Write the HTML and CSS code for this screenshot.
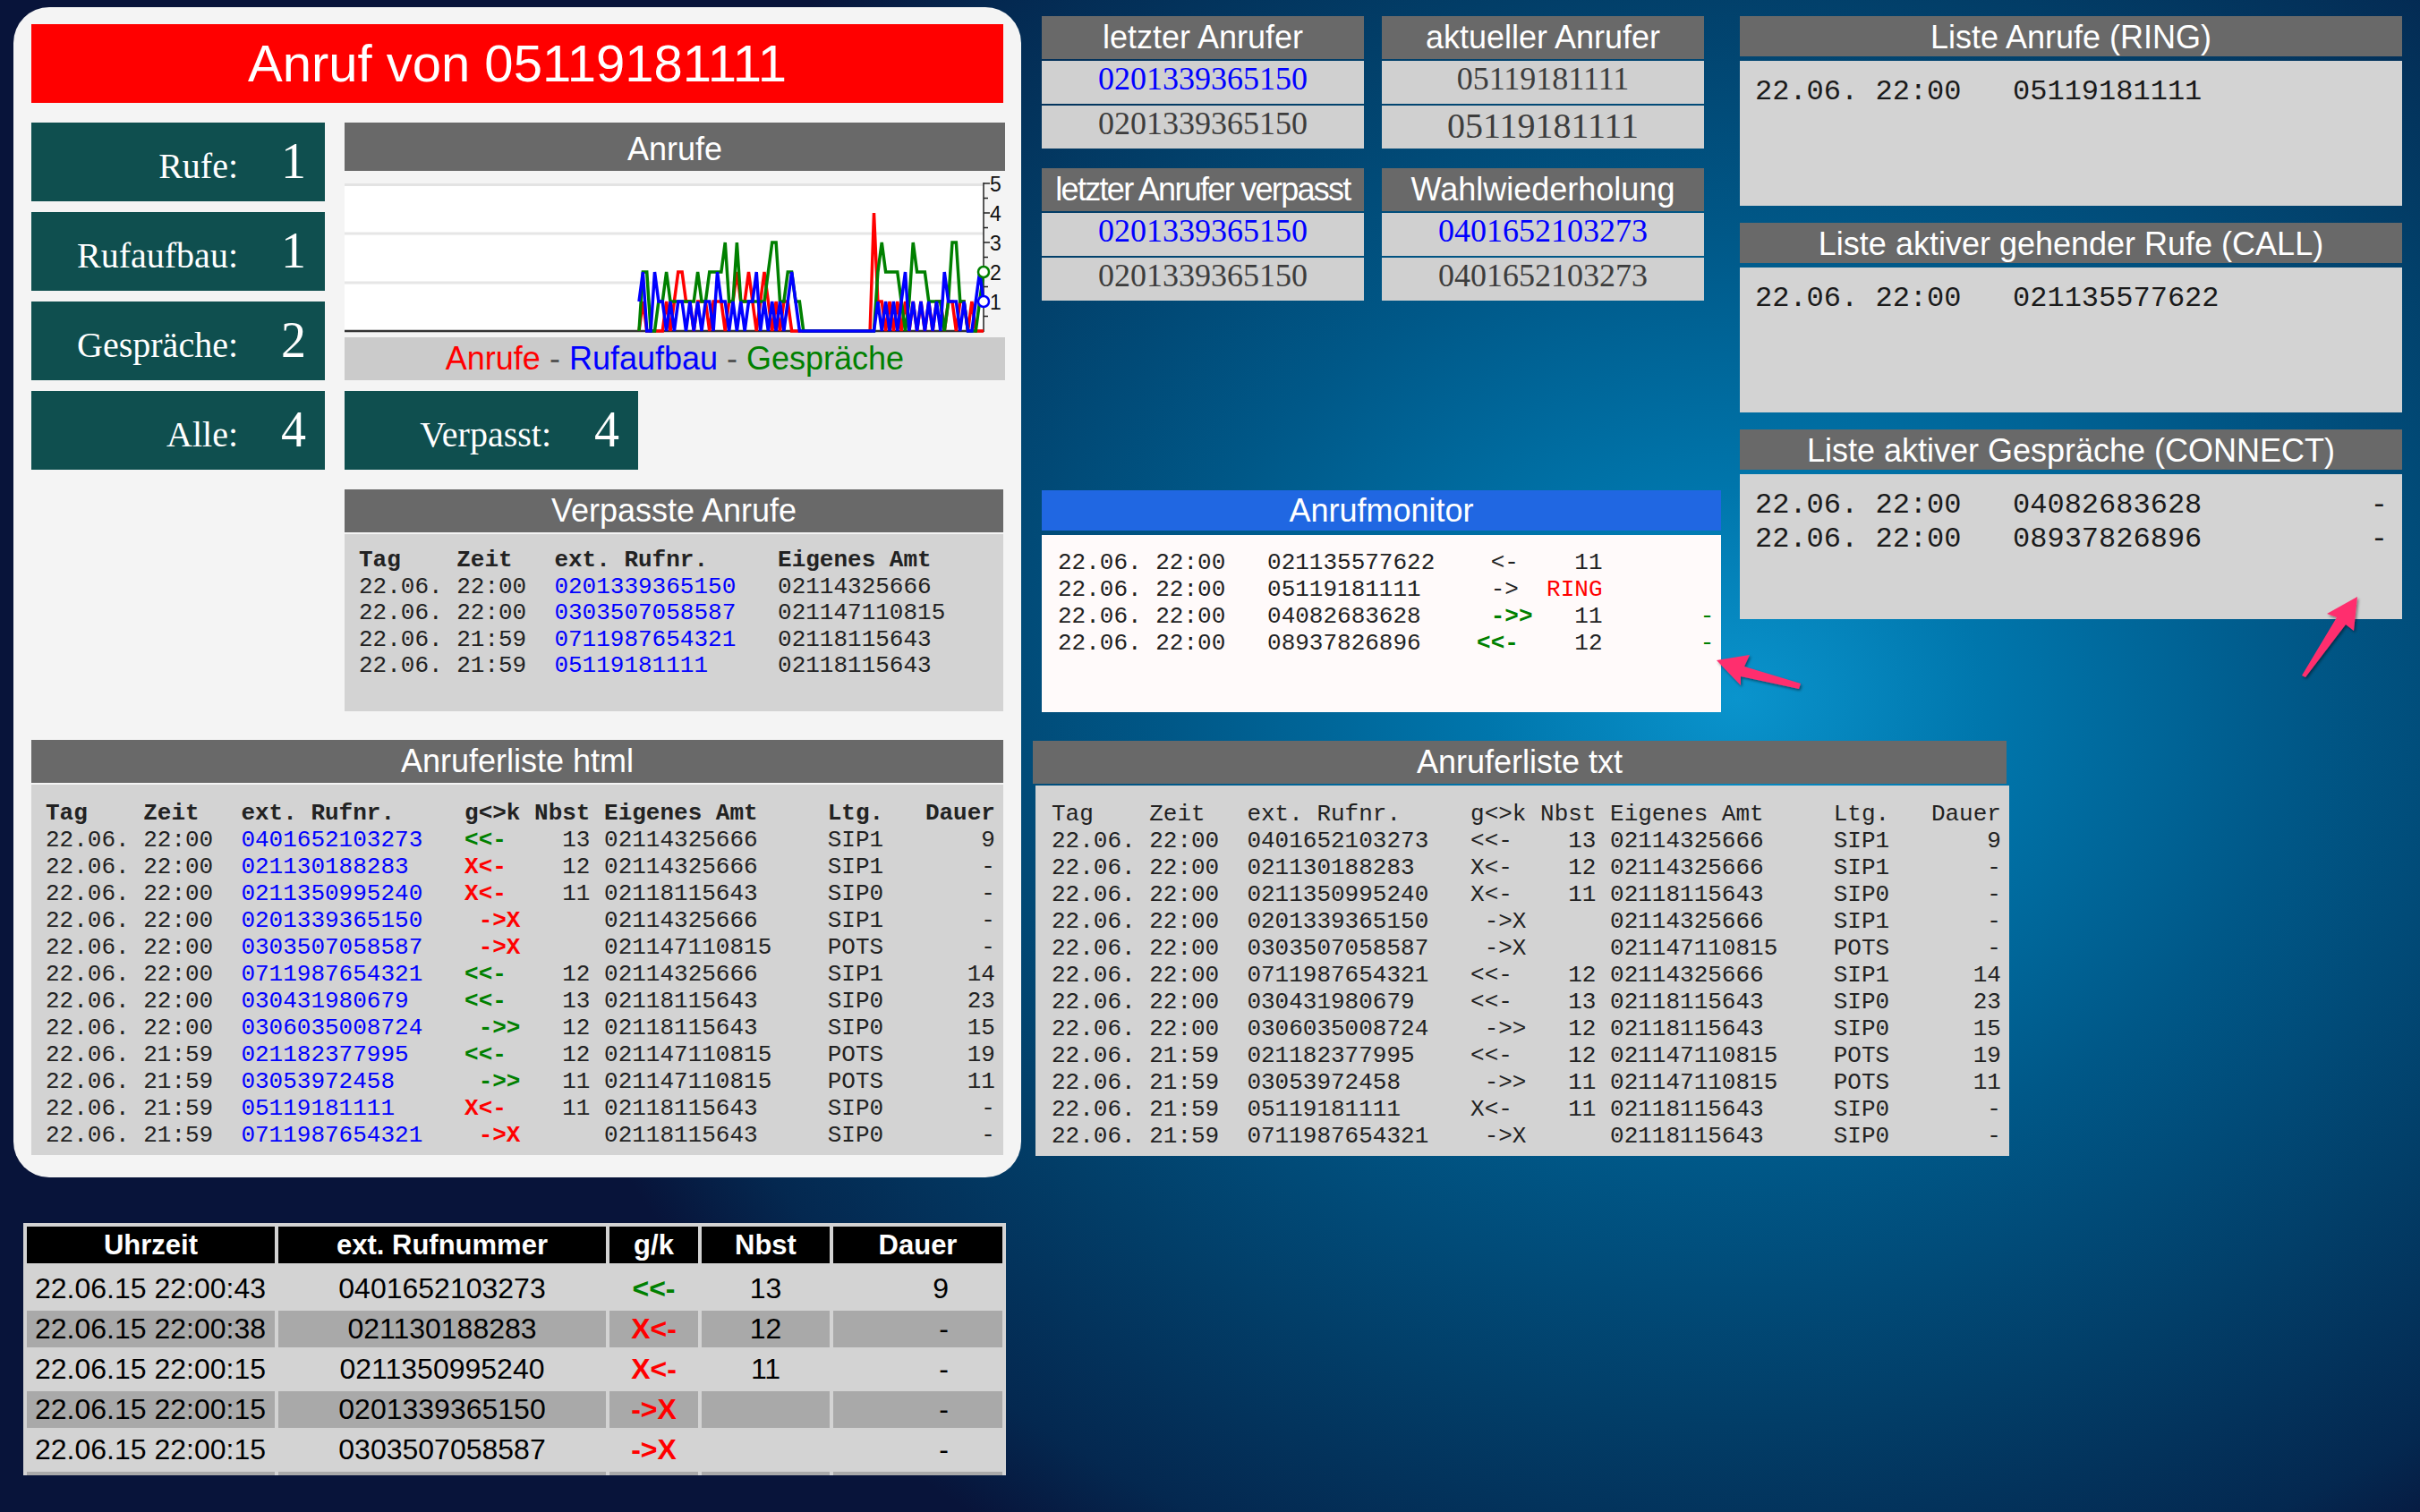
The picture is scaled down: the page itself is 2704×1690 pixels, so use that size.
FILE: index.html
```html
<!DOCTYPE html>
<html lang="de">
<head>
<meta charset="utf-8">
<title>Anrufmonitor</title>
<link rel="stylesheet" href="styles.css">
</head>
<body>
<div class="page">
  <div class="leftcol">
    <div class="panel">
      <div class="callbar">Anruf von 05119181111</div>
      <div class="toprow">
        <div class="counters">
          <div class="counter"><span class="clabel">Rufe:</span><span class="cval">1</span></div>
          <div class="counter"><span class="clabel">Rufaufbau:</span><span class="cval">1</span></div>
          <div class="counter"><span class="clabel">Gespräche:</span><span class="cval">2</span></div>
          <div class="counter"><span class="clabel">Alle:</span><span class="cval">4</span></div>
        </div>
        <div class="graphcol">
          <div class="sechead tall">Anrufe</div>
          <svg class="chart" width="738" height="186" viewBox="0 0 738 186">
            <rect x="0" y="14" width="714" height="165" fill="#ffffff"/>
            <line x1="0" y1="15.5" x2="714" y2="15.5" stroke="#e3e3e3" stroke-width="3"/>
            <line x1="0" y1="70" x2="714" y2="70" stroke="#e6e6e6" stroke-width="3"/>
            <line x1="0" y1="125" x2="714" y2="125" stroke="#e6e6e6" stroke-width="3"/>
            <line x1="0" y1="179" x2="714" y2="179" stroke="#333333" stroke-width="2.5"/>
            <line x1="714" y1="13" x2="714" y2="180" stroke="#222222" stroke-width="1.5"/>
            <g stroke="#222222" stroke-width="1.5">
              <line x1="714" y1="14" x2="721" y2="14"/>
              <line x1="714" y1="30.5" x2="719" y2="30.5"/>
              <line x1="714" y1="47" x2="721" y2="47"/>
              <line x1="714" y1="63.5" x2="719" y2="63.5"/>
              <line x1="714" y1="80" x2="721" y2="80"/>
              <line x1="714" y1="96.5" x2="719" y2="96.5"/>
              <line x1="714" y1="113" x2="721" y2="113"/>
              <line x1="714" y1="129.5" x2="719" y2="129.5"/>
              <line x1="714" y1="146" x2="721" y2="146"/>
              <line x1="714" y1="162.5" x2="719" y2="162.5"/>
            </g>
            <g class="axislabels" font-size="23" fill="#111111">
              <text x="721" y="23">5</text>
              <text x="721" y="56">4</text>
              <text x="721" y="89">3</text>
              <text x="721" y="122">2</text>
              <text x="721" y="155">1</text>
            </g>
            <g transform="translate(329,179) scale(4.375,-33)" fill="none" stroke-width="3.5" stroke-linejoin="miter">
              <polyline vector-effect="non-scaling-stroke" stroke="#ff0000" points="0,0 1,1 2,0 3,0 4,0 5,0 6,0 7,1 8,0 9,1 10,2 11,2 12,1 13,1 14,0 15,1 16,1 17,1 18,0 19,1 20,1 21,1 22,0 23,1 24,1 25,2 26,1 27,1 28,2 29,1 30,0 31,1 32,2 33,1 34,0 35,1 36,0 37,1 38,1 39,0 40,0 59,0 60,4 61,1 62,1 63,0 64,1 65,0 66,1 67,0 68,1 69,0 70,1 71,0 72,1 73,0 74,1 75,0 76,1 77,1 78,0 79,1 80,1 81,0 82,1 83,1 84,0 85,1 86,0 87,0 88,0"/>
              <polyline vector-effect="non-scaling-stroke" stroke="#008000" points="0,0 1,2 2,2 3,0 4,0 5,1 6,1 7,2 8,1 9,1 10,1 11,1 12,1 13,1 14,1 15,2 16,1 17,1 18,2 19,2 20,2 21,2 22,3 23,1 24,1 25,3 26,1 27,1 28,1 29,1 30,1 31,1 32,1 33,2 34,3 35,3 36,1 37,1 38,2 39,2 40,1 41,1 42,0 60,0 61,2 62,3 63,2 64,2 65,2 66,2 67,1 68,0 69,1 70,3 71,2 72,2 73,2 74,1 75,1 76,1 77,1 78,0 79,1 80,3 81,3 82,1 83,1 84,0 85,0 86,0 87,1 88,2"/>
              <polyline vector-effect="non-scaling-stroke" stroke="#0000ff" points="0,1 1,2 2,0 3,0 4,2 5,1 6,1 7,0 8,1 9,0 10,1 11,1 12,0 13,1 14,0 15,1 16,0 17,1 18,1 19,0 20,2 21,1 22,1 23,0 24,1 25,0 26,1 27,0 28,1 29,1 30,2 31,0 32,1 33,0 34,1 35,0 36,1 37,0 38,1 39,2 40,1 41,0 60,0 61,1 62,0 63,1 64,0 65,1 66,0 67,1 68,2 69,0 70,1 71,0 72,1 73,0 74,1 75,0 76,1 77,0 78,2 79,1 80,1 81,1 82,0 83,1 84,0 85,0 86,1 87,2 88,1"/>
            </g>
            <circle cx="714" cy="113" r="6" fill="#ffffff" stroke="#008000" stroke-width="2.5"/>
            <circle cx="714" cy="146" r="6" fill="#ffffff" stroke="#0000ff" stroke-width="2.5"/>
          </svg>
          <div class="legend"><span class="red">Anrufe</span> - <span class="blue">Rufaufbau</span> - <span class="green">Gespräche</span></div>
          <div class="counter missed"><span class="clabel">Verpasst:</span><span class="cval">4</span></div>
          <div class="section missedlist">
            <div class="sechead">Verpasste Anrufe</div>
            <div class="secbody">
              <div class="vgrid mono">
                <span class="b">Tag</span><span class="b">Zeit</span><span class="b">ext. Rufnr.</span><span class="b">Eigenes Amt</span>
                <span>22.06.</span><span>22:00</span><span class="bl">0201339365150</span><span>02114325666</span>
                <span>22.06.</span><span>22:00</span><span class="bl">0303507058587</span><span>021147110815</span>
                <span>22.06.</span><span>21:59</span><span class="bl">0711987654321</span><span>02118115643</span>
                <span>22.06.</span><span>21:59</span><span class="bl">05119181111</span><span>02118115643</span>
              </div>
            </div>
          </div>
        </div>
      </div>
      <div class="section htmllist">
        <div class="sechead">Anruferliste html</div>
        <div class="secbody">
          <div class="lgrid mono">
            <span class="b">Tag</span><span class="b">Zeit</span><span class="b">ext. Rufnr.</span><span class="b">g&lt;&gt;k</span><span class="b r">Nbst</span><span class="b">Eigenes Amt</span><span class="b">Ltg.</span><span class="b r">Dauer</span>
            <span>22.06.</span><span>22:00</span><span class="bl">0401652103273</span><span class="b gr">&lt;&lt;-</span><span class="r">13</span><span>02114325666</span><span>SIP1</span><span class="r">9</span>
            <span>22.06.</span><span>22:00</span><span class="bl">021130188283</span><span class="b rd">X&lt;-</span><span class="r">12</span><span>02114325666</span><span>SIP1</span><span class="r">-</span>
            <span>22.06.</span><span>22:00</span><span class="bl">0211350995240</span><span class="b rd">X&lt;-</span><span class="r">11</span><span>02118115643</span><span>SIP0</span><span class="r">-</span>
            <span>22.06.</span><span>22:00</span><span class="bl">0201339365150</span><span class="b rd"> -&gt;X</span><span class="r"></span><span>02114325666</span><span>SIP1</span><span class="r">-</span>
            <span>22.06.</span><span>22:00</span><span class="bl">0303507058587</span><span class="b rd"> -&gt;X</span><span class="r"></span><span>021147110815</span><span>POTS</span><span class="r">-</span>
            <span>22.06.</span><span>22:00</span><span class="bl">0711987654321</span><span class="b gr">&lt;&lt;-</span><span class="r">12</span><span>02114325666</span><span>SIP1</span><span class="r">14</span>
            <span>22.06.</span><span>22:00</span><span class="bl">030431980679</span><span class="b gr">&lt;&lt;-</span><span class="r">13</span><span>02118115643</span><span>SIP0</span><span class="r">23</span>
            <span>22.06.</span><span>22:00</span><span class="bl">0306035008724</span><span class="b gr"> -&gt;&gt;</span><span class="r">12</span><span>02118115643</span><span>SIP0</span><span class="r">15</span>
            <span>22.06.</span><span>21:59</span><span class="bl">021182377995</span><span class="b gr">&lt;&lt;-</span><span class="r">12</span><span>021147110815</span><span>POTS</span><span class="r">19</span>
            <span>22.06.</span><span>21:59</span><span class="bl">03053972458</span><span class="b gr"> -&gt;&gt;</span><span class="r">11</span><span>021147110815</span><span>POTS</span><span class="r">11</span>
            <span>22.06.</span><span>21:59</span><span class="bl">05119181111</span><span class="b rd">X&lt;-</span><span class="r">11</span><span>02118115643</span><span>SIP0</span><span class="r">-</span>
            <span>22.06.</span><span>21:59</span><span class="bl">0711987654321</span><span class="b rd"> -&gt;X</span><span class="r"></span><span>02118115643</span><span>SIP0</span><span class="r">-</span>
          </div>
        </div>
      </div>
    </div>
    <div class="tablewrap">
      <table class="lasttable">
        <colgroup><col class="w1"><col class="w2"><col class="w3"><col class="w4"><col class="w5"></colgroup>
        <thead>
          <tr><th>Uhrzeit</th><th>ext. Rufnummer</th><th>g/k</th><th>Nbst</th><th>Dauer</th></tr>
          <tr class="spacer"><td colspan="5"></td></tr>
        </thead>
        <tbody>
          <tr class="lt"><td class="tm">22.06.15 22:00:43</td><td class="ct">0401652103273</td><td class="ct b gr">&lt;&lt;-</td><td class="ct">13</td><td class="du">9</td></tr>
          <tr class="dk"><td class="tm">22.06.15 22:00:38</td><td class="ct">021130188283</td><td class="ct b rd">X&lt;-</td><td class="ct">12</td><td class="du">-</td></tr>
          <tr class="lt"><td class="tm">22.06.15 22:00:15</td><td class="ct">0211350995240</td><td class="ct b rd">X&lt;-</td><td class="ct">11</td><td class="du">-</td></tr>
          <tr class="dk"><td class="tm">22.06.15 22:00:15</td><td class="ct">0201339365150</td><td class="ct b rd">-&gt;X</td><td class="ct"></td><td class="du">-</td></tr>
          <tr class="lt"><td class="tm">22.06.15 22:00:15</td><td class="ct">0303507058587</td><td class="ct b rd">-&gt;X</td><td class="ct"></td><td class="du">-</td></tr>
          <tr class="dk"><td class="tm"></td><td class="ct"></td><td class="ct"></td><td class="ct"></td><td class="du"></td></tr>
        </tbody>
      </table>
    </div>
  </div>

  <div class="rightarea">
    <div class="toparea">
      <div class="midcol">
        <div class="numgrid">
          <div class="nbox">
            <div class="nhead">letzter Anrufer</div>
            <div class="nrow blue">0201339365150</div>
            <div class="nrow">0201339365150</div>
          </div>
          <div class="nbox">
            <div class="nhead">aktueller Anrufer</div>
            <div class="nrow">05119181111</div>
            <div class="nrow big">05119181111</div>
          </div>
          <div class="nbox">
            <div class="nhead tight">letzter Anrufer verpasst</div>
            <div class="nrow blue">0201339365150</div>
            <div class="nrow">0201339365150</div>
          </div>
          <div class="nbox">
            <div class="nhead">Wahlwiederholung</div>
            <div class="nrow blue">0401652103273</div>
            <div class="nrow">0401652103273</div>
          </div>
        </div>
        <div class="monitor">
          <div class="monhead">Anrufmonitor</div>
          <div class="monbody mono">
<div class="pre">22.06. 22:00   021135577622    &lt;-    11</div>
<div class="pre">22.06. 22:00   05119181111     -&gt;  <span class="rd">RING</span></div>
<div class="pre">22.06. 22:00   04082683628     <span class="b gr">-&gt;&gt;</span>   11       <span class="gr">-</span></div>
<div class="pre">22.06. 22:00   08937826896    <span class="b gr">&lt;&lt;-</span>    12       <span class="gr">-</span></div>
          </div>
        </div>
      </div>
      <div class="listcol">
        <div class="lbox">
          <div class="lhead">Liste Anrufe (RING)</div>
          <div class="lbody">
            <div class="lline"><span>22.06. 22:00   05119181111</span></div>
          </div>
        </div>
        <div class="lbox">
          <div class="lhead">Liste aktiver gehender Rufe (CALL)</div>
          <div class="lbody">
            <div class="lline"><span>22.06. 22:00   021135577622</span></div>
          </div>
        </div>
        <div class="lbox">
          <div class="lhead">Liste aktiver Gespräche (CONNECT)</div>
          <div class="lbody">
            <div class="lline"><span>22.06. 22:00   04082683628</span><span>-</span></div>
            <div class="lline"><span>22.06. 22:00   08937826896</span><span>-</span></div>
          </div>
        </div>
      </div>
    </div>
    <div class="section txtlist">
      <div class="sechead">Anruferliste txt</div>
      <div class="secbody">
        <div class="lgrid mono">
          <span>Tag</span><span>Zeit</span><span>ext. Rufnr.</span><span>g&lt;&gt;k</span><span class="r">Nbst</span><span>Eigenes Amt</span><span>Ltg.</span><span class="r">Dauer</span>
          <span>22.06.</span><span>22:00</span><span>0401652103273</span><span>&lt;&lt;-</span><span class="r">13</span><span>02114325666</span><span>SIP1</span><span class="r">9</span>
          <span>22.06.</span><span>22:00</span><span>021130188283</span><span>X&lt;-</span><span class="r">12</span><span>02114325666</span><span>SIP1</span><span class="r">-</span>
          <span>22.06.</span><span>22:00</span><span>0211350995240</span><span>X&lt;-</span><span class="r">11</span><span>02118115643</span><span>SIP0</span><span class="r">-</span>
          <span>22.06.</span><span>22:00</span><span>0201339365150</span><span> -&gt;X</span><span class="r"></span><span>02114325666</span><span>SIP1</span><span class="r">-</span>
          <span>22.06.</span><span>22:00</span><span>0303507058587</span><span> -&gt;X</span><span class="r"></span><span>021147110815</span><span>POTS</span><span class="r">-</span>
          <span>22.06.</span><span>22:00</span><span>0711987654321</span><span>&lt;&lt;-</span><span class="r">12</span><span>02114325666</span><span>SIP1</span><span class="r">14</span>
          <span>22.06.</span><span>22:00</span><span>030431980679</span><span>&lt;&lt;-</span><span class="r">13</span><span>02118115643</span><span>SIP0</span><span class="r">23</span>
          <span>22.06.</span><span>22:00</span><span>0306035008724</span><span> -&gt;&gt;</span><span class="r">12</span><span>02118115643</span><span>SIP0</span><span class="r">15</span>
          <span>22.06.</span><span>21:59</span><span>021182377995</span><span>&lt;&lt;-</span><span class="r">12</span><span>021147110815</span><span>POTS</span><span class="r">19</span>
          <span>22.06.</span><span>21:59</span><span>03053972458</span><span> -&gt;&gt;</span><span class="r">11</span><span>021147110815</span><span>POTS</span><span class="r">11</span>
          <span>22.06.</span><span>21:59</span><span>05119181111</span><span>X&lt;-</span><span class="r">11</span><span>02118115643</span><span>SIP0</span><span class="r">-</span>
          <span>22.06.</span><span>21:59</span><span>0711987654321</span><span> -&gt;X</span><span class="r"></span><span>02118115643</span><span>SIP0</span><span class="r">-</span>
        </div>
      </div>
    </div>
  </div>
</div>

<svg class="annot" width="2704" height="1690" viewBox="0 0 2704 1690">
  <defs>
    <filter id="sh" x="-20%" y="-20%" width="140%" height="140%">
      <feDropShadow dx="1.5" dy="2" stdDeviation="1.5" flood-color="#000000" flood-opacity="0.45"/>
    </filter>
  </defs>
  <path filter="url(#sh)" fill="#ff2f6e" d="M1918 738 L1955 732 L1949 745 L2012 764 L2010 770 L1945 756 L1945 766 Z"/>
  <path filter="url(#sh)" fill="#ff2f6e" d="M2634 667 L2600 686 L2611 690 L2572 755 L2576 757 L2621 698 L2630 705 Z"/>
</svg>
</body>
</html>
```

FILE: styles.css
```css
* { box-sizing: border-box; }

html, body { margin: 0; padding: 0; }

body {
  width: 2704px;
  height: 1690px;
  overflow: hidden;
  position: relative;
  background-color: #08143a;
  background-image: radial-gradient(ellipse 1400px 1150px at 1940px 780px,
    #0a94cd 0%, #0076ac 20%, #005888 45%, #023e68 70%, #042850 90%, rgba(8, 20, 58, 0) 100%);
  font-family: "Liberation Sans", Arial, sans-serif;
  color: #222;
}

.page {
  display: flex;
  align-items: flex-start;
  padding: 8px 0 0 15px;
}

/* ---------- left column ---------- */
.leftcol { width: 1126px; flex: none; }

.panel {
  background: #f4f4f4;
  border-radius: 40px;
  padding: 19px 20px 25px;
}

.callbar {
  background: #ff0000;
  color: #fff;
  height: 88px;
  line-height: 88px;
  text-align: center;
  font-size: 58px;
}

.toprow {
  display: flex;
  gap: 22px;
  margin-top: 22px;
}

.counters {
  width: 328px;
  flex: none;
  display: flex;
  flex-direction: column;
  gap: 12px;
}

.counter {
  width: 328px;
  height: 88px;
  background: #0f4f4f;
  color: #fff;
  display: flex;
  align-items: baseline;
  padding: 15px 21px 0 0;
  font-family: "Liberation Serif", "Times New Roman", serif;
}

.clabel { flex: 1; text-align: right; font-size: 40px; }
.cval { font-size: 56px; line-height: 56px; margin-left: 48px; }

.counter.missed { margin-top: 12px; }

.graphcol { width: 738px; flex: none; }

.sechead {
  background: #696969;
  color: #fff;
  text-align: center;
  font-size: 36px;
  height: 48px;
  line-height: 48px;
}

.sechead.tall { height: 54px; padding-top: 6px; }

.chart { display: block; width: 738px; height: 186px; }
.axislabels { font-family: "Liberation Sans", Arial, sans-serif; }

.legend {
  background: #cbcbcb;
  height: 48px;
  line-height: 48px;
  text-align: center;
  font-size: 36px;
  color: #555;
}

.red { color: #ff0000; }
.blue { color: #0000ff; }
.green { color: #008000; }

.secbody { background: #d3d3d3; margin-top: 2px; }

.missedlist { margin-top: 22px; width: 736px; }
.missedlist .secbody { height: 198px; padding: 15px 16px; }

.mono {
  font-family: "Liberation Mono", "Courier New", monospace;
  font-size: 26px;
  line-height: 30px;
  color: #222;
}

.vgrid {
  display: grid;
  grid-template-columns: 7ch 7ch 16ch auto;
  line-height: 29.5px;
}

.lgrid {
  display: grid;
  grid-template-columns: 7ch 7ch 16ch 5ch 5ch 16ch 7ch 5ch;
}

.vgrid span, .lgrid span { white-space: pre; }
.lgrid .r { text-align: right; }
.lgrid span:nth-child(8n+5) { padding-right: 1ch; }

.b { font-weight: bold; }
.bl { color: #0000ff; }
.gr { color: #008000; }
.rd { color: #ff0000; }

.htmllist { margin-top: 32px; }
.htmllist .secbody { height: 414px; padding: 17px 16px; }

/* ---------- bottom table ---------- */
.tablewrap {
  margin: 51px 0 0 11px;
  width: 1098px;
  height: 282px;
  overflow: hidden;
  background: #d3d3d3;
}

.lasttable {
  width: 1098px;
  table-layout: fixed;
  border-collapse: separate;
  border-spacing: 4px;
  font-family: "Liberation Sans", Arial, sans-serif;
  font-size: 32px;
  color: #000;
}

.w1 { width: 277px; }
.w2 { width: 366px; }
.w3 { width: 99px; }
.w4 { width: 143px; }
.w5 { width: 189px; }

.lasttable th {
  background: #000;
  color: #fff;
  font-weight: bold;
  font-size: 31px;
  height: 41px;
  line-height: 41px;
  padding: 0;
  text-align: center;
}

.lasttable .spacer td { height: 0; padding: 0; line-height: 0; }

.lasttable td {
  height: 41px;
  line-height: 41px;
  padding: 0;
  white-space: nowrap;
}

.lasttable tr.lt td { background: #d3d3d3; }
.lasttable tr.dk td { background: #a9a9a9; }
.lasttable .tm { text-align: left; padding-left: 9px; }
.lasttable .ct { text-align: center; }
.lasttable .du { text-align: right; padding-right: 60px; }

/* ---------- right area ---------- */
.rightarea { margin-left: 13px; flex: none; }

.toparea {
  display: flex;
  align-items: flex-start;
  padding-top: 10px;
}

.midcol { width: 759px; margin-left: 10px; flex: none; }

.numgrid {
  display: grid;
  grid-template-columns: 360px 360px;
  column-gap: 20px;
  row-gap: 22px;
}

.nhead {
  background: #696969;
  color: #fff;
  text-align: center;
  font-size: 36px;
  height: 48px;
  line-height: 48px;
  white-space: nowrap;
}

.nhead.tight { letter-spacing: -1.7px; }

.nrow {
  margin-top: 2px;
  height: 48px;
  background: #d0d0d0;
  color: #3d3d3d;
  text-align: center;
  font-family: "Liberation Serif", "Times New Roman", serif;
  font-size: 36px;
  line-height: 40px;
}

.nrow.blue { color: #0000ff; }
.nrow.big { font-size: 40px; padding-top: 3px; }

.monitor { margin-top: 212px; }

.monhead {
  background: #2067e2;
  color: #fff;
  text-align: center;
  font-size: 36px;
  height: 45px;
  line-height: 45px;
}

.monbody {
  margin-top: 5px;
  height: 198px;
  background: #fffafa;
  padding: 16px 18px;
}

.pre { white-space: pre; }

.listcol { width: 740px; margin-left: 21px; flex: none; }

.lbox + .lbox { margin-top: 19px; }

.lhead {
  background: #696969;
  color: #fff;
  text-align: center;
  font-size: 36px;
  height: 45px;
  line-height: 45px;
  padding-top: 1px;
}

.lbody {
  margin-top: 5px;
  height: 162px;
  background: #d3d3d3;
  padding: 16px 16px 0 17px;
  font-family: "Liberation Mono", "Courier New", monospace;
  font-size: 32px;
  line-height: 38px;
  color: #1a1a1a;
}

.lline {
  display: flex;
  justify-content: space-between;
  white-space: pre;
}

.txtlist { margin-top: 32px; width: 1091px; }
.txtlist .sechead { width: 1088px; }
.txtlist .secbody {
  width: 1088px;
  margin-left: 3px;
  height: 414px;
  padding: 17px 18px;
}

/* ---------- annotation arrows ---------- */
.annot {
  position: absolute;
  left: 0;
  top: 0;
  pointer-events: none;
}
```
